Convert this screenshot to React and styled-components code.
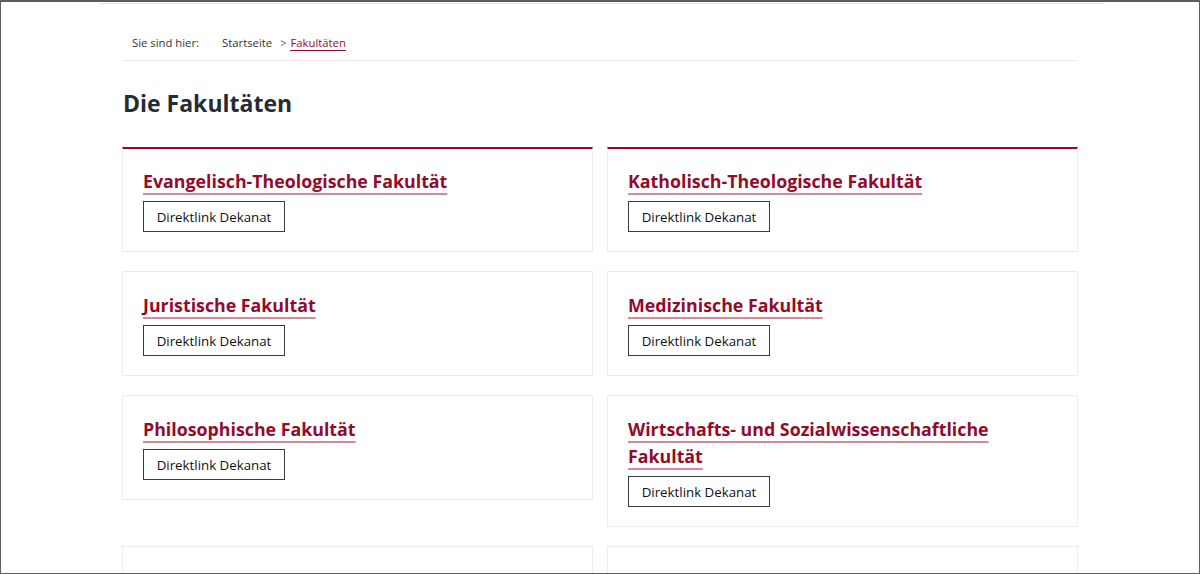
import React from "react";
import styled, { createGlobalStyle } from "styled-components";

const GlobalStyle = createGlobalStyle`
  html, body {
    margin: 0;
    padding: 0;
    background: #fff;
  }
  body {
    font-family: "Open Sans", "Noto Sans", sans-serif;
    color: #222;
  }
`;

const Frame = styled.div`
  box-sizing: border-box;
  width: 1200px;
  height: 574px;
  border: 1px solid #5c5c5c;
  border-top-width: 2px;
  overflow: hidden;
  background: #fff;
`;

const HeaderEdge = styled.div`
  width: 1004px;
  height: 1px;
  margin: 0 0 0 99px;
  border-bottom: 1px solid #e4e4e4;
`;

const Main = styled.main`
  width: 956px;
  margin: 0 auto;
`;

const Breadcrumb = styled.nav`
  display: flex;
  align-items: center;
  height: 57px;
  padding: 21px 0 0 10px;
  box-sizing: border-box;
  border-bottom: 1px solid #ececec;
  font-size: 11.3px;
  color: #333;
`;

const CrumbLabel = styled.span`
  margin-right: 23px;
`;

const Crumb = styled.a`
  color: ${(p) => (p.$active ? "#9a0a2b" : "#333")};
  text-decoration: none;
  border-bottom: ${(p) => (p.$active ? "1px solid #9a0a2b" : "none")};
  line-height: 15px;
`;

const Sep = styled.span`
  margin: 0 4px 0 8px;
  color: #555;
  font-size: 11px;
`;

const Title = styled.h1`
  margin: 27px 0 29px 1px;
  font-size: 23px;
  line-height: 30px;
  font-weight: 700;
  color: #232d33;
`;

const Grid = styled.div`
  display: grid;
  grid-template-columns: 471px 471px;
  column-gap: 14px;
  row-gap: 19px;
  align-items: start;
`;

const Card = styled.div`
  box-sizing: border-box;
  border: 1px solid #ececec;
  border-top: ${(p) => (p.$accent ? "2px solid #940a2a" : "1px solid #ececec")};
  padding: ${(p) => (p.$accent ? "19px" : "20px")} 20px 19px 20px;
  min-height: ${(p) => (p.$empty ? "60px" : "auto")};
  background: #fff;
`;

const CardTitle = styled.h2`
  margin: 0 0 5px 0;
  font-size: 17.8px;
  line-height: 27px;
  font-weight: 700;
  max-width: 380px;
`;

const TitleLink = styled.a`
  color: #940a2a;
  text-decoration: underline;
  text-decoration-color: #d48a9b;
  text-decoration-thickness: 2px;
  text-underline-offset: 5px;
`;

const Button = styled.a`
  display: inline-flex;
  align-items: center;
  justify-content: center;
  box-sizing: border-box;
  width: 142px;
  height: 31px;
  margin-top: 1px;
  border: 1px solid #3a3a3a;
  font-size: 13.3px;
  color: #111;
  text-decoration: none;
  background: #fff;
`;

const faculties = [
  { name: "Evangelisch-Theologische Fakultät", accent: true },
  { name: "Katholisch-Theologische Fakultät", accent: true },
  { name: "Juristische Fakultät" },
  { name: "Medizinische Fakultät" },
  { name: "Philosophische Fakultät" },
  { name: "Wirtschafts- und Sozialwissenschaftliche Fakultät" },
];

export default function App() {
  return (
    <>
      <GlobalStyle />
      <Frame>
        <HeaderEdge />
        <Main>
          <Breadcrumb>
            <CrumbLabel>Sie sind hier:</CrumbLabel>
            <Crumb href="#">Startseite</Crumb>
            <Sep>&gt;</Sep>
            <Crumb href="#" $active>
              Fakultäten
            </Crumb>
          </Breadcrumb>
          <Title>Die Fakultäten</Title>
          <Grid>
            {faculties.map((f) => (
              <Card key={f.name} $accent={f.accent}>
                <CardTitle>
                  <TitleLink href="#">{f.name}</TitleLink>
                </CardTitle>
                <Button href="#">Direktlink Dekanat</Button>
              </Card>
            ))}
            <Card $empty />
            <Card $empty />
          </Grid>
        </Main>
      </Frame>
    </>
  );
}
